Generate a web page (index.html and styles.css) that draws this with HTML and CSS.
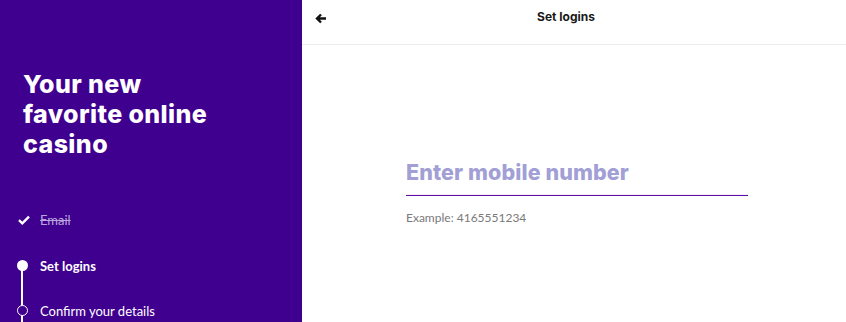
FILE: index.html
```html
<!DOCTYPE html>
<html lang="en">
<head>
<meta charset="utf-8">
<title>Set logins</title>
<link rel="stylesheet" href="styles.css">
</head>
<body>
<div class="page">
  <aside class="sidebar">
    <h1 class="headline">Your new favorite online casino</h1>
    <ol class="steps">
      <li class="step done">
        <span class="marker"><svg width="12" height="10" viewBox="0 0 12 10"><path d="M1 5.2 L4.3 8.3 L11 1.6" fill="none" stroke="#fff" stroke-width="2.4" stroke-linejoin="miter"/></svg></span>
        <span class="label">Email</span>
      </li>
      <li class="step current">
        <span class="marker"><span class="dot"></span></span>
        <span class="label">Set logins</span>
      </li>
      <li class="step todo">
        <span class="marker"><span class="ring"></span></span>
        <span class="label">Confirm your details</span>
      </li>
    </ol>
  </aside>
  <main class="main">
    <header class="topbar">
      <button class="back" aria-label="Back"><svg width="12" height="11" viewBox="0 0 12 11"><path d="M11 5.5 H3 M6 1.5 L2 5.5 L6 9.5" fill="none" stroke="#111" stroke-width="2.4"/></svg></button>
      <div class="title">Set logins</div>
    </header>
    <section class="form">
      <div class="field">
        <div class="input-wrap">
          <input class="input" type="tel" placeholder="Enter mobile number">
        </div>
        <div class="hint">Example: 4165551234</div>
      </div>
    </section>
  </main>
</div>
</body>
</html>
```
FILE: styles.css
```css
* { box-sizing: border-box; }
html, body { margin: 0; padding: 0; }
body {
  font-family: "Lato", "Liberation Sans", sans-serif;
  width: 846px;
  height: 322px;
  overflow: hidden;
  background: #fff;
}
.page {
  display: flex;
  height: 322px;
}
.sidebar {
  width: 302px;
  flex: none;
  background: #3f008f;
  color: #fff;
  padding-top: 69px;
  overflow: hidden;
}
.headline {
  margin: 0 0 0 23px;
  font-family: "Inter", "Liberation Sans", sans-serif;
  font-size: 25px;
  line-height: 30px;
  font-weight: 800;
  width: 210px;
  letter-spacing: 0.4px;
}
.steps {
  list-style: none;
  margin: 38px 0 0 0;
  padding: 0 0 0 16px;
}
.step {
  position: relative;
  display: flex;
  align-items: center;
  height: 45px;
  font-size: 13px;
}
.step.done { height: 46px; }
.marker {
  width: 12px;
  display: flex;
  justify-content: center;
  align-items: center;
  margin-right: 12px;
}
.done .marker { margin-left: 2px; margin-right: 10px; }
.done .label {
  color: #b9a6dc;
  text-decoration: line-through;
}
.current .label { font-weight: 700; }
.dot {
  width: 11px;
  height: 11px;
  border-radius: 50%;
  background: #fff;
}
.ring {
  width: 11px;
  height: 11px;
  border-radius: 50%;
  border: 1.5px solid #fff;
  background: #3f008f;
  position: relative;
  z-index: 1;
}
.current::after {
  content: "";
  position: absolute;
  left: 5px;
  top: 22px;
  width: 2px;
  height: 90px;
  background: #fff;
}
.main {
  flex: 1;
  display: flex;
  flex-direction: column;
}
.topbar {
  height: 45px;
  flex: none;
  border-bottom: 1px solid #ececec;
  display: flex;
  align-items: center;
  position: relative;
  padding-left: 13px;
}
.back {
  border: 0;
  background: none;
  padding: 0;
  width: 14px;
  height: 14px;
  display: flex;
  align-items: center;
  margin-top: -8px;
}
.title {
  position: absolute;
  left: 0;
  right: 16px;
  top: 9px;
  text-align: center;
  font-family: "Inter", "Liberation Sans", sans-serif;
  font-size: 12px;
  font-weight: 700;
  color: #1a1a1a;
  pointer-events: none;
}
.form {
  padding: 112px 0 0 104px;
}
.field { width: 342px; }
.input-wrap {
  height: 39px;
  border-bottom: 1px solid #5a10a6;
  box-shadow: 0 -1px 0 #fbeefb inset;
}
.input {
  display: block;
  width: 100%;
  height: 38px;
  border: 0;
  padding: 2px 0 10px 0;
  line-height: 26px;
  font-family: "Inter", "Liberation Sans", sans-serif;
  font-size: 21.5px;
  font-weight: 800;
  letter-spacing: 0.1px;
  outline: none;
  background: transparent;
}
.input::placeholder { color: #a19fd5; opacity: 1; }
.hint {
  margin-top: 14px;
  font-size: 12px;
  color: #7a7a7a;
}
```
